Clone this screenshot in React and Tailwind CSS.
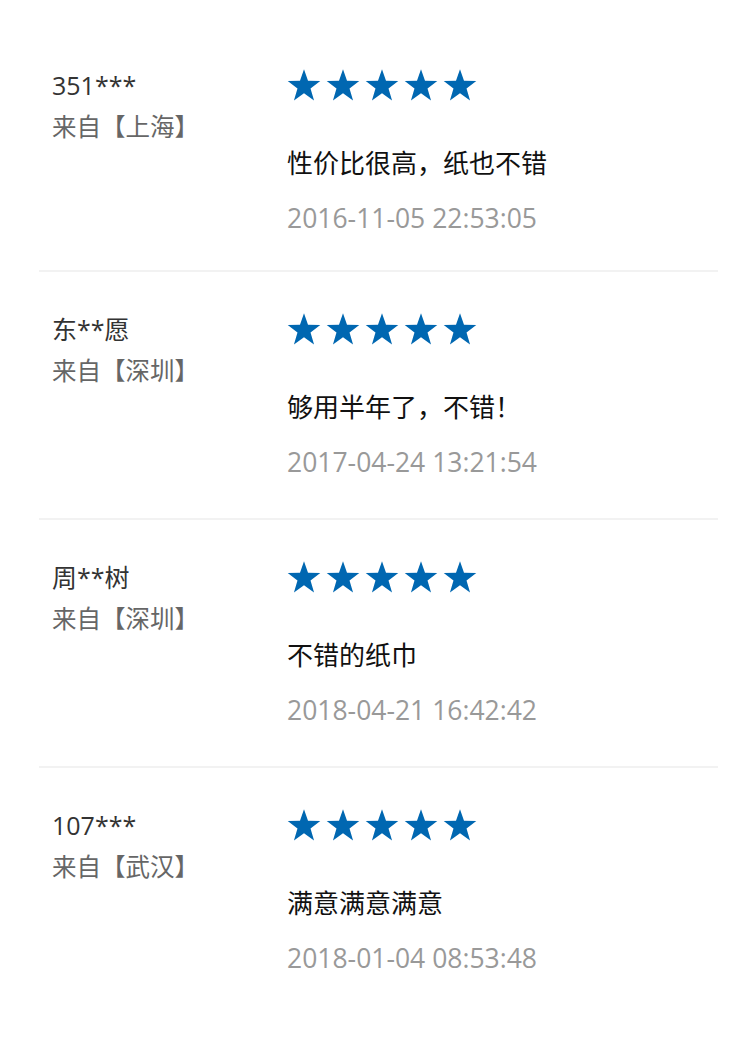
const reviews = [
    { name: "351***", city: "上海", text: "性价比很高，纸也不错", date: "2016-11-05 22:53:05" },
    { name: "东**愿", city: "深圳", text: "够用半年了，不错！", date: "2017-04-24 13:21:54" },
    { name: "周**树", city: "深圳", text: "不错的纸巾", date: "2018-04-21 16:42:42" },
    { name: "107***", city: "武汉", text: "满意满意满意", date: "2018-01-04 08:53:48" },
];

function Star() {
    return (
        <svg width="34" height="33" viewBox="0 0 24 23" className="block">
            <polygon
                fill="#0067b1"
                points="12,0 14.83,8.2 23.5,8.4 16.6,13.6 19.1,22 12,17 4.9,22 7.4,13.6 0.5,8.4 9.17,8.2"
            />
        </svg>
    );
}

export default function App() {
    return (
        <div
            className="w-[750px] min-h-[1041px] bg-white pt-[28px]"
            style={{ fontFamily: '"Open Sans", "Noto Sans CJK SC", sans-serif' }}
        >
            <div className="ml-[39px] w-[679px]">
                {reviews.map((r, i) => (
                    <div
                        key={i}
                        className={`flex pl-[13px] pt-[37px] ${i === 0 ? "h-[244px]" : "h-[248px]"} ${
                            i < reviews.length - 1 ? "border-b-2 border-[#f2f2f2]" : ""
                        }`}
                    >
                        <div className="w-[235px] shrink-0">
                            <p className="text-[25px] leading-[40px] text-[#333]">{r.name}</p>
                            <p className="text-[24.5px] leading-[44px] text-[#666]">来自【{r.city}】</p>
                        </div>
                        <div>
                            <div className="flex items-center gap-[5px] h-10">
                                {[0, 1, 2, 3, 4].map((s) => (
                                    <Star key={s} />
                                ))}
                            </div>
                            <p className="mt-[38px] text-[26px] leading-[40px] text-[#111]">{r.text}</p>
                            <p className="mt-[15px] text-[26.5px] leading-[40px] text-[#999]">{r.date}</p>
                        </div>
                    </div>
                ))}
            </div>
        </div>
    );
}
